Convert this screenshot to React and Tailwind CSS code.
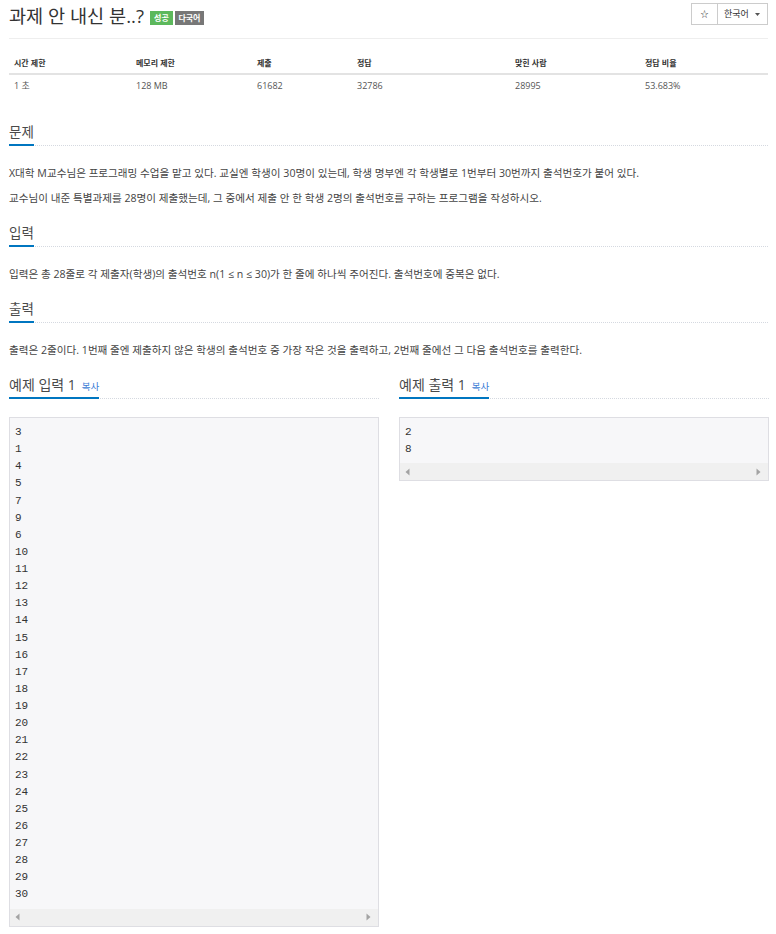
import React from "react";

const sans = { fontFamily: '"Open Sans","Noto Sans CJK KR",sans-serif' };

function Headline({ children, className = "" }) {
  return (
    <div className={"flex items-start border-b border-dotted border-[#d5d9e0] " + className}>
      <h2 className="h-[24px] flex items-start text-[13.5px] leading-[20px] font-normal text-[#4a4a4a] pb-[2px] border-b-2 border-[#0076c0] mb-[-1px] whitespace-nowrap">
        {children}
      </h2>
    </div>
  );
}

function Tri({ dir }) {
  return (
    <svg width="5" height="8" viewBox="0 0 5 8" className="block">
      {dir === "left" ? (
        <polygon points="4.5,0.5 4.5,7.5 0.5,4" fill="#a3a3a3" />
      ) : (
        <polygon points="0.5,0.5 0.5,7.5 4.5,4" fill="#a3a3a3" />
      )}
    </svg>
  );
}

function Sample({ lines }) {
  return (
    <div className="border border-[#dedee3] bg-[#f7f7f9]">
      <div
        className="pl-[5px] pt-[6px] pb-[5px] text-[11px] text-[#333]"
        style={{ fontFamily: '"Liberation Mono",monospace' }}
      >
        {lines.map((l, i) => (
          <div key={i} className="h-[17.14px] leading-[17.14px] whitespace-pre">
            {l}
          </div>
        ))}
      </div>
      <div className="h-[17px] bg-[#f0f0f0] flex items-center justify-between pl-[5px] pr-[7px]">
        <Tri dir="left" />
        <Tri dir="right" />
      </div>
    </div>
  );
}

function P({ children, first }) {
  return (
    <p
      className={
        (first ? "mt-[19px]" : "mt-[9px]") +
        " h-[16px] overflow-visible whitespace-nowrap text-[10.6px] leading-[16px] text-[#444]"
      }
    >
      {children}
    </p>
  );
}

export default function App() {
  const input = ["3", "1", "4", "5", "7", "9", "6"];
  for (let i = 10; i <= 30; i++) input.push(String(i));
  const cols = [
    ["시간 제한", "1 초", "w-[122px]"],
    ["메모리 제한", "128 MB", "w-[121px]"],
    ["제출", "61682", "w-[100px]"],
    ["정답", "32786", "w-[158px]"],
    ["맞힌 사람", "28995", "w-[130px]"],
    ["정답 비율", "53.683%", "w-[128px]"],
  ];
  return (
    <div className="bg-white min-h-[934px] pl-[9px] pr-[8px]" style={sans}>
      {/* header */}
      <div className="h-[39px] border-b border-[#eeeeee] flex justify-between items-start">
        <div className="flex items-start">
          <h1 className="mt-[5px] h-[22px] text-[18.6px] leading-[22px] font-normal text-[#333] whitespace-nowrap">
            과제 안 내신 분..?
          </h1>
          <span className="ml-[6px] mt-[11px] h-[14px] w-[23px] flex items-center justify-center bg-[#5cb85c] text-white text-[8px] font-bold">
            성공
          </span>
          <span className="ml-[2px] mt-[11px] h-[14px] w-[29px] flex items-center justify-center bg-[#777777] text-white text-[8px] font-bold">
            다국어
          </span>
        </div>
        <div className="mt-[3px] flex">
          <div className="w-[27px] h-[22px] border border-[#cccccc] flex items-center justify-center text-[8px] text-[#333]">
            ☆
          </div>
          <div className="w-[50px] h-[22px] border border-l-0 border-[#cccccc] flex items-center justify-between pl-[6px] pr-[7px] text-[9px] text-[#333]">
            <span>한국어</span>
            <svg width="5" height="3" viewBox="0 0 5 3">
              <polygon points="0,0 5,0 2.5,3" fill="#555" />
            </svg>
          </div>
        </div>
      </div>

      {/* table */}
      <table className="mt-[13px] w-full table-fixed border-collapse">
        <thead>
          <tr>
            {cols.map((c) => (
              <th
                key={c[0]}
                className={c[2] + " h-[22px] px-[5px] text-left text-[8px] font-bold text-[#333] border-b-2 border-[#e3e3e3] align-middle"}
              >
                {c[0]}
              </th>
            ))}
          </tr>
        </thead>
        <tbody>
          <tr>
            {cols.map((c) => (
              <td key={c[0]} className="h-[22px] px-[5px] text-[9px] text-[#555] align-middle">
                {c[1]}
              </td>
            ))}
          </tr>
        </tbody>
      </table>

      {/* 문제 */}
      <Headline className="mt-[26px]">문제</Headline>
      <P first>
        X대학 M교수님은 프로그래밍 수업을 맡고 있다. 교실엔 학생이 30명이 있는데, 학생 명부엔 각 학생별로 1번부터 30번까지 출석번호가 붙어 있다.
      </P>
      <P>
        교수님이 내준 특별과제를 28명이 제출했는데, 그 중에서 제출 안 한 학생 2명의 출석번호를 구하는 프로그램을 작성하시오.
      </P>

      {/* 입력 */}
      <Headline className="mt-[17px]">입력</Headline>
      <P first>
        입력은 총 28줄로 각 제출자(학생)의 출석번호 n(1 ≤ n ≤ 30)가 한 줄에 하나씩 주어진다. 출석번호에 중복은 없다.
      </P>

      {/* 출력 */}
      <Headline className="mt-[17px]">출력</Headline>
      <P first>
        출력은 2줄이다. 1번째 줄엔 제출하지 않은 학생의 출석번호 중 가장 작은 것을 출력하고, 2번째 줄에선 그 다음 출석번호를 출력한다.
      </P>

      {/* 예제 */}
      <div className="mt-[17px] mr-[-1px] grid grid-cols-2 gap-[20px] items-start">
        <div>
          <Headline>
            <span className="text-[14px]">예제 입력 1</span>
            <span className="ml-[6px] mt-[2px] text-[9.5px] text-[#3a7bd5]">복사</span>
          </Headline>
          <div className="mt-[18px]">
            <Sample lines={input} />
          </div>
        </div>
        <div>
          <Headline>
            <span className="text-[14px]">예제 출력 1</span>
            <span className="ml-[6px] mt-[2px] text-[9.5px] text-[#3a7bd5]">복사</span>
          </Headline>
          <div className="mt-[18px]">
            <Sample lines={["2", "8"]} />
          </div>
        </div>
      </div>
    </div>
  );
}
